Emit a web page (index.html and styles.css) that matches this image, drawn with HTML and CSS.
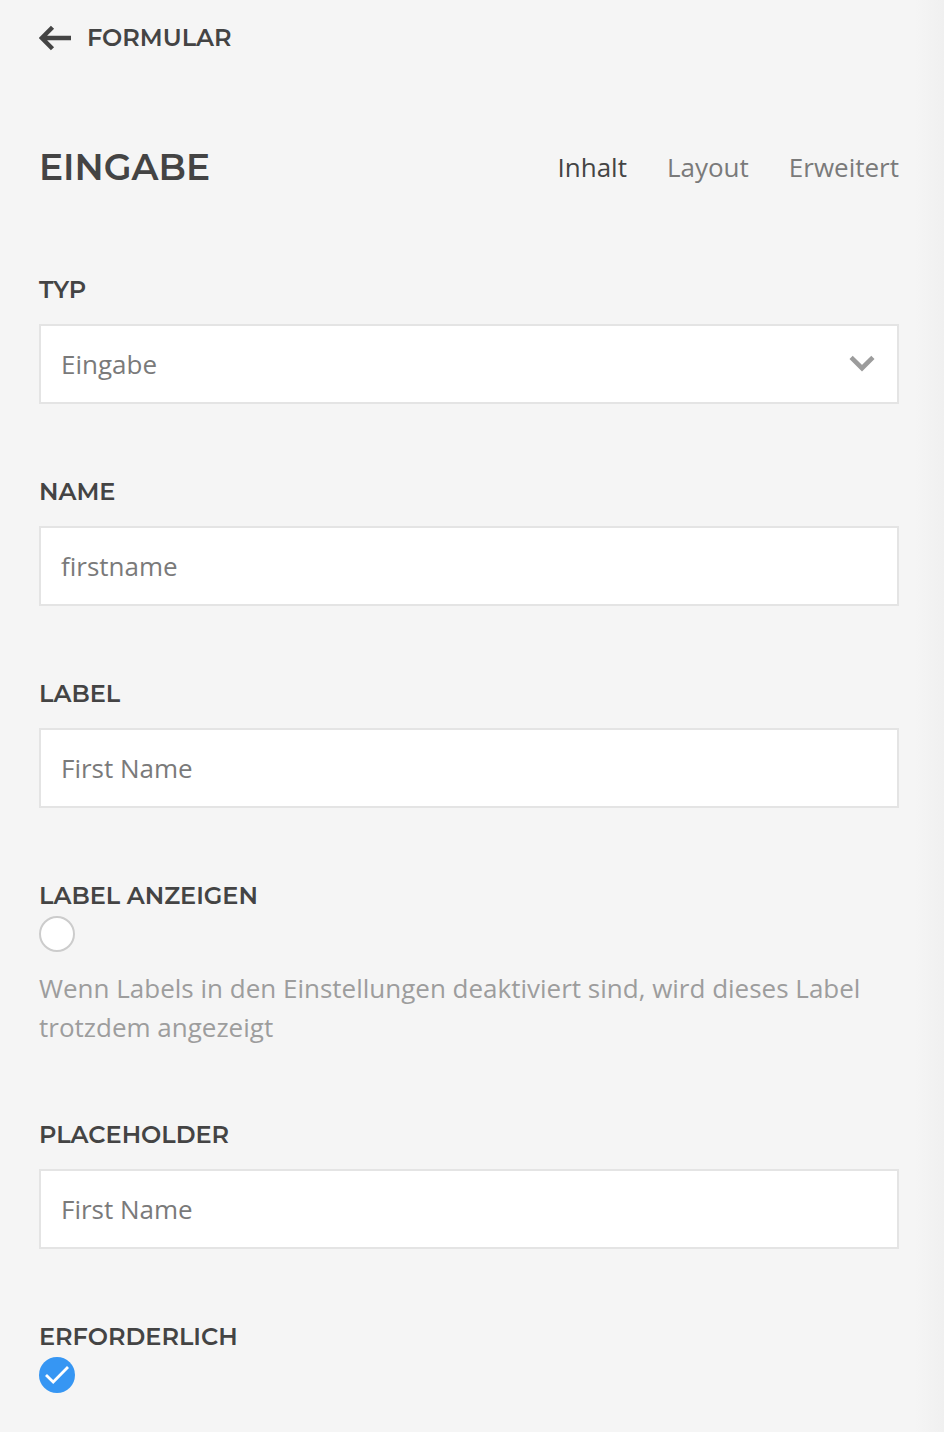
FILE: index.html
```html
<!DOCTYPE html>
<html lang="de">
<head>
<meta charset="utf-8">
<title>Eingabe</title>
<link rel="stylesheet" href="styles.css">
</head>
<body>
<main class="panel">
  <a class="back">
    <svg class="arrow" width="32" height="26" viewBox="0 0 32 26" fill="none" stroke="#444" stroke-width="4.4"><path d="M2.5 13H32M13.5 2.2L2.8 13L13.5 23.8"/></svg>
    <span>FORMULAR</span>
  </a>
  <header class="head">
    <h1>EINGABE</h1>
    <nav class="tabs"><span class="active">Inhalt</span><span>Layout</span><span>Erweitert</span></nav>
  </header>
  <section class="field">
    <h2>TYP</h2>
    <div class="box"><span>Eingabe</span><svg class="chevron" width="26" height="18" viewBox="0 0 26 18" fill="none" stroke="#9c9c9c" stroke-width="4.6"><path d="M2.1 2.4L13 13.2L23.9 2.4"/></svg></div>
  </section>
  <section class="field">
    <h2>NAME</h2>
    <div class="box"><span>firstname</span></div>
  </section>
  <section class="field">
    <h2>LABEL</h2>
    <div class="box"><span>First Name</span></div>
  </section>
  <section class="field toggle">
    <h2>LABEL ANZEIGEN</h2>
    <div class="check"></div>
    <p>Wenn Labels in den Einstellungen deaktiviert sind, wird dieses Label trotzdem angezeigt</p>
  </section>
  <section class="field">
    <h2>PLACEHOLDER</h2>
    <div class="box"><span>First Name</span></div>
  </section>
  <section class="field toggle">
    <h2>ERFORDERLICH</h2>
    <div class="check on"><svg width="36" height="36" viewBox="0 0 36 36" fill="none" stroke="#fff" stroke-width="2.8"><path d="M7 18L14.2 25L29 10"/></svg></div>
  </section>
</main>
</body>
</html>
```
FILE: styles.css
```css
* { box-sizing: border-box; }
body { margin: 0; background: #f5f5f5; font-family: "Open Sans", sans-serif; font-size: 26px; color: #7a7a7a; }
.panel { height: 1432px; padding: 24px 45px 0 39px; overflow: hidden; background: linear-gradient(to right, #f5f5f5 915px, #f0f0f0 944px); }
h1, h2, p { margin: 0; }
svg { display: block; }
.back, h1, h2 { color: #444; font: 600 24px/28px "Montserrat", "Inter", sans-serif; }
.back { display: flex; height: 28px; align-items: center; gap: 16px; }
h1 { font-size: 36px; line-height: 36px; padding-bottom: 4px; }
.head { display: flex; justify-content: space-between; align-items: center; height: 40px; margin-top: 97px; }
.tabs { display: flex; gap: 40px; line-height: 36px; padding-bottom: 4px; }
.active { color: #444; }
.field { height: 202px; }
.head + .field { margin-top: 87px; }
.field h2 { height: 28px; }
.box { display: flex; justify-content: space-between; align-items: center; width: 860px; height: 80px; margin-top: 20px; padding: 0 22px 0 20px; border: 2px solid #e4e4e4; background: #fff; }
.check { width: 36px; height: 36px; margin-top: 6px; border: 2px solid #ccc; border-radius: 50%; background: #fff; }
.on { border: 0; background: #3696f3; }
.toggle { height: 239px; }
.toggle p { margin-top: 17px; line-height: 39px; color: #9d9d9d; }
```
